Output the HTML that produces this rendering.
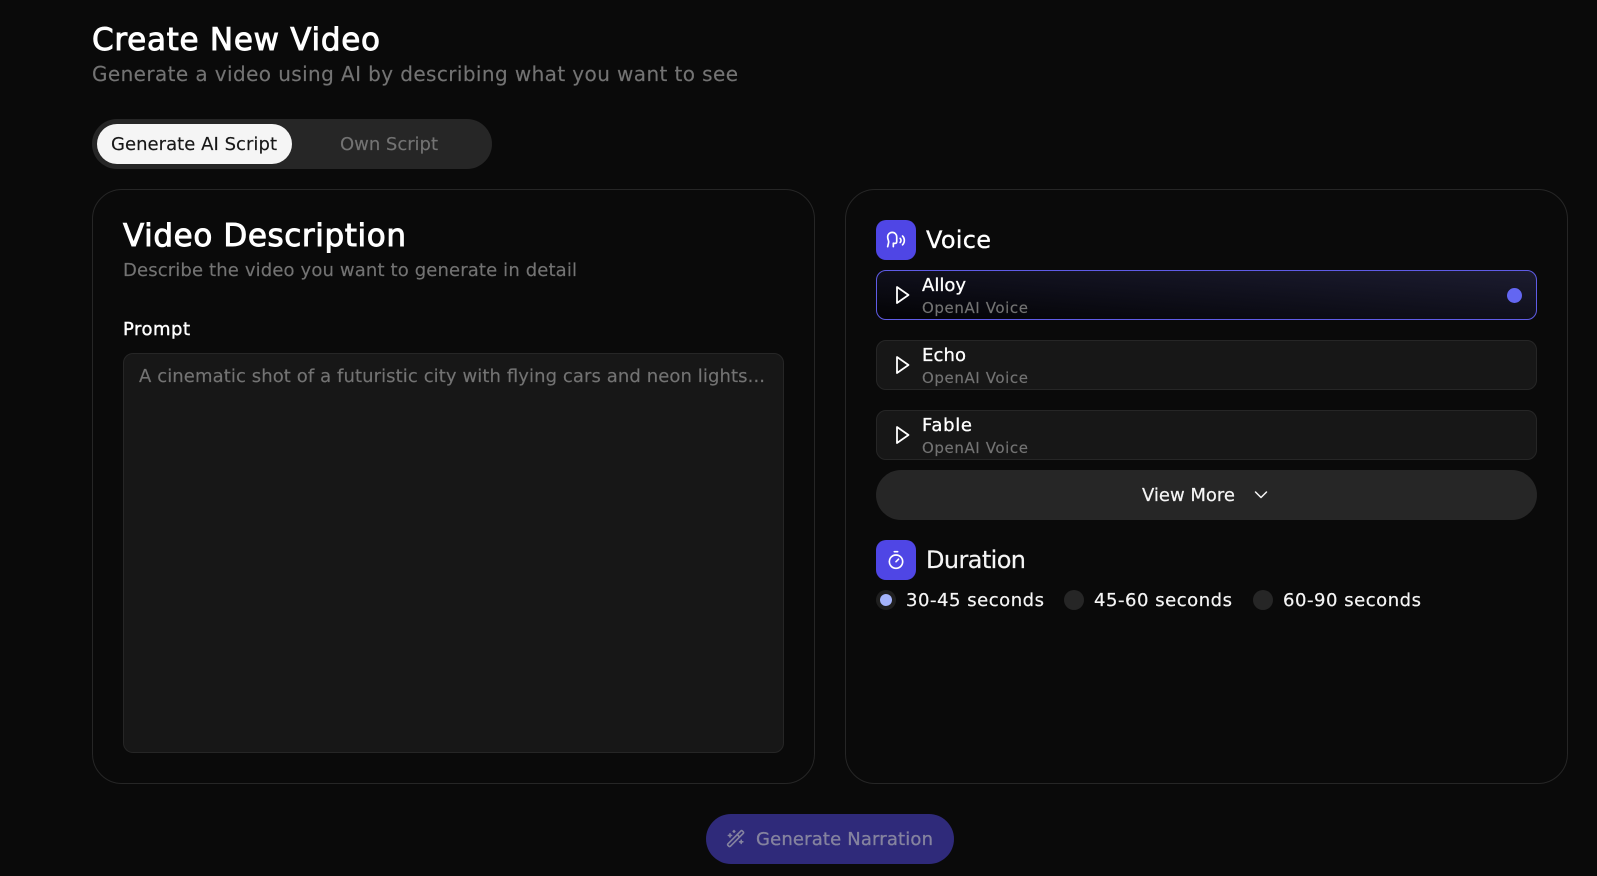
<!DOCTYPE html>
<html lang="en">
<head>
<meta charset="utf-8">
<title>Create New Video</title>
<style>
html,body{margin:0;padding:0;width:1597px;height:876px;overflow:hidden;background:#0a0a0a}
.b{position:absolute;box-sizing:border-box}
svg{position:absolute;left:0;top:0}
text{font-family:"DejaVu Sans","Liberation Sans",sans-serif;white-space:pre}
.g{fill:#737373;stroke:#737373;stroke-width:.15}
.w{fill:#fff;stroke:#fff;stroke-width:.3}
.l{fill:#f5f5f5;stroke:#f5f5f5;stroke-width:.2}
.v{left:876px;width:661px;height:50px;border-radius:10px;background:#171717;border:1px solid #262626}
.r{width:20px;height:20px;border-radius:50%;background:#262626;top:590px}
</style>
</head>
<body>
<div class="b" style="left:92px;top:119px;width:400px;height:50px;border-radius:25px;background:#262626"></div>
<div class="b" style="left:97px;top:124px;width:195px;height:40px;border-radius:20px;background:#f5f5f5"></div>
<div class="b" style="left:92px;top:189px;width:723px;height:595px;border-radius:30px;border:1px solid #262626"></div>
<div class="b" style="left:845px;top:189px;width:723px;height:595px;border-radius:30px;border:1px solid #262626"></div>
<div class="b" style="left:123px;top:353px;width:661px;height:400px;border-radius:10px;background:#171717;border:1px solid #262626"></div>
<div class="b" style="left:876px;top:220px;width:40px;height:40px;border-radius:10px;background:#4f46e5"></div>
<div class="b v" style="top:270px;border-color:#5f5ce6;background:linear-gradient(to top right,#030305 0%,#0d0d17 40%,#1c1c30 100%)"></div>
<div class="b v" style="top:340px"></div>
<div class="b v" style="top:410px"></div>
<div class="b" style="left:1507px;top:288px;width:15px;height:15px;border-radius:50%;background:#6366f1"></div>
<div class="b" style="left:876px;top:470px;width:661px;height:50px;border-radius:25px;background:#262626"></div>
<div class="b" style="left:876px;top:540px;width:40px;height:40px;border-radius:10px;background:#4f46e5"></div>
<div class="b r" style="left:876px;background:#1f1f1f"></div>
<div class="b" style="left:880px;top:594px;width:12px;height:12px;border-radius:50%;background:#a5b4fc"></div>
<div class="b r" style="left:1064px"></div>
<div class="b r" style="left:1253px"></div>
<div class="b" style="left:706px;top:814px;width:248px;height:50px;border-radius:25px;background:#2f2a7a"></div>

<svg width="1597" height="876" viewBox="0 0 1597 876">
  <text x="92" y="50" font-size="31" fill="#fff" stroke="#fff" stroke-width=".9" textLength="288">Create New Video</text>
  <text x="92" y="81" font-size="20" class="g" textLength="646">Generate a video using AI by describing what you want to see</text>
  <text x="111" y="150" font-size="18" fill="#171717" stroke="#171717" stroke-width=".15" textLength="166">Generate AI Script</text>
  <text x="340" y="150" font-size="18" class="g" textLength="98">Own Script</text>
  <text x="123" y="246" font-size="31" fill="#fff" stroke="#fff" stroke-width=".9" textLength="283">Video Description</text>
  <text x="123" y="276" font-size="18" class="g" textLength="454">Describe the video you want to generate in detail</text>
  <text x="123" y="335" font-size="18" fill="#fff" stroke="#fff" stroke-width=".4" textLength="67">Prompt</text>
  <text x="139" y="382" font-size="18" class="g" textLength="626">A cinematic shot of a futuristic city with flying cars and neon lights...</text>

  <text x="926" y="248" font-size="24" class="w" textLength="65">Voice</text>
  <text x="922" y="291" font-size="18" class="w" textLength="44">Alloy</text>
  <text x="922" y="313" font-size="15" class="g" textLength="106">OpenAI Voice</text>
  <text x="922" y="361" font-size="18" class="w" textLength="44">Echo</text>
  <text x="922" y="383" font-size="15" class="g" textLength="106">OpenAI Voice</text>
  <text x="922" y="431" font-size="18" class="w" textLength="50">Fable</text>
  <text x="922" y="453" font-size="15" class="g" textLength="106">OpenAI Voice</text>
  <text x="1142" y="501" font-size="18" class="l" textLength="93">View More</text>
  <text x="926" y="568" font-size="24" class="l" textLength="100">Duration</text>
  <text x="906" y="606" font-size="18" class="l" textLength="138">30-45 seconds</text>
  <text x="1094" y="606" font-size="18" class="l" textLength="138">45-60 seconds</text>
  <text x="1283" y="606" font-size="18" class="l" textLength="138">60-90 seconds</text>
  <text x="756" y="845" font-size="18" fill="#85839f" stroke="#85839f" stroke-width=".3" textLength="177">Generate Narration</text>

  <!-- speech -->
  <g transform="translate(886 230) scale(.8333)" fill="none" stroke="#fff" stroke-width="2" stroke-linecap="round" stroke-linejoin="round">
    <path d="M8.8 20v-4.1l1.9.2a2.3 2.3 0 0 0 2.164-2.1V8.3A5.37 5.37 0 0 0 2 8.25c0 2.8.656 3.054 1 4.55a5.77 5.77 0 0 1 .029 2.758L2 20"/>
    <path d="M19.8 17.8a7.5 7.5 0 0 0 .003-10.603"/>
    <path d="M17 15a3.5 3.5 0 0 0-.025-4.975"/>
  </g>
  <!-- play -->
  <g fill="none" stroke="#fff" stroke-width="1.8" stroke-linejoin="round">
    <polygon points="897,287 908.500,295 897,303"/>
    <polygon points="897,357 908.500,365 897,373"/>
    <polygon points="897,427 908.500,435 897,443"/>
  </g>
  <!-- chevron -->
  <path d="M1255.500 492l5.500 5.500 5.500-5.500" fill="none" stroke="#f5f5f5" stroke-width="1.5" stroke-linecap="round" stroke-linejoin="round"/>
  <!-- timer -->
  <g transform="translate(886 550) scale(.8333)" fill="none" stroke="#fff" stroke-width="2" stroke-linecap="round" stroke-linejoin="round">
    <line x1="10" x2="14" y1="2" y2="2"/>
    <line x1="12" x2="15" y1="14" y2="11"/>
    <circle cx="12" cy="14" r="8"/>
  </g>
  <!-- wand -->
  <g transform="translate(726 829) scale(.8)" fill="none" stroke="#85839f" stroke-width="2" stroke-linecap="round" stroke-linejoin="round">
    <path d="m21.640 3.640-1.280-1.280a1.210 1.210 0 0 0-1.720 0L2.360 18.640a1.210 1.210 0 0 0 0 1.720l1.280 1.280a1.200 1.200 0 0 0 1.720 0L21.640 5.360a1.200 1.200 0 0 0 0-1.720"/>
    <path d="m14 7 3 3"/><path d="M5 6v4"/><path d="M19 14v4"/><path d="M10 2v2"/><path d="M7 8H3"/><path d="M21 16h-4"/><path d="M11 3H9"/>
  </g>
</svg>
</body>
</html>
